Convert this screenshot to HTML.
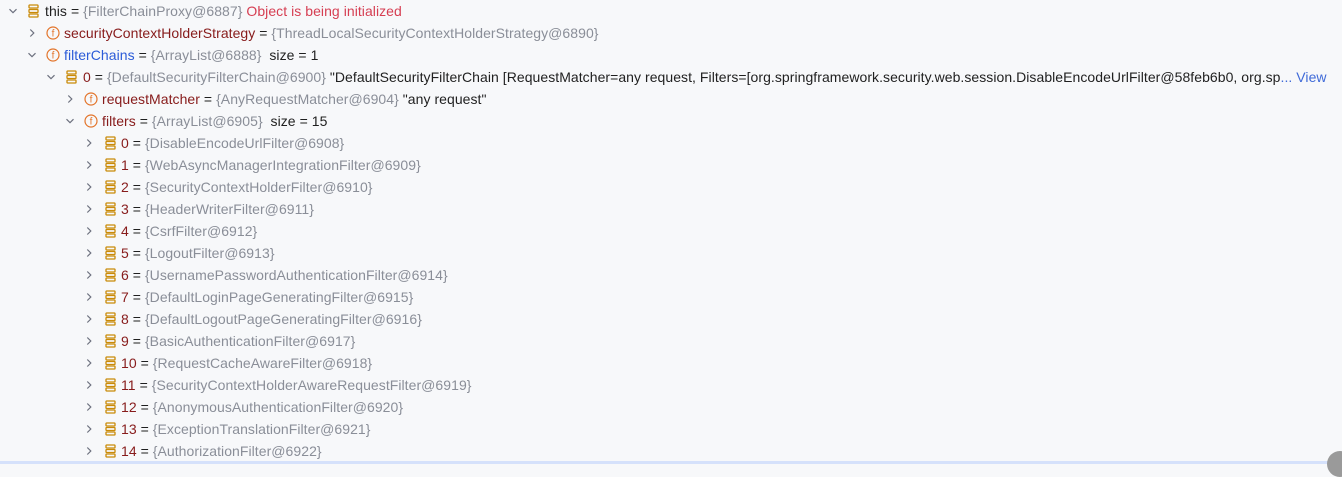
<!DOCTYPE html>
<html><head><meta charset="utf-8"><style>
html,body{margin:0;padding:0;}
body{width:1342px;height:464px;background:#f7f8fa;position:relative;overflow:hidden;font-family:"Liberation Sans",sans-serif;font-size:14px;letter-spacing:0.05px;color:#1f1f1f;}
.r{position:absolute;height:22px;line-height:22px;white-space:nowrap;left:0;}
.a{position:absolute;top:6px;width:10px;height:10px;}
.o{position:absolute;top:4px;width:11px;height:14px;}
.f{position:absolute;top:4px;width:14px;height:14px;}
.t{position:absolute;top:0;}
.g{color:#8a8e98}.n{color:#871b1b}.b{color:#2b5bd8}.e{color:#d63e52}.v{color:#1f1f1f}.l{color:#3f6ad8}
.sel{position:absolute;left:0;top:461px;width:1342px;height:3px;background:#d5e1fb}
.sc{position:absolute;left:1327px;top:451px;width:26px;height:26px;border-radius:50%;background:#9a9a9a}
</style></head><body>
<svg width="0" height="0" style="position:absolute"><defs>
<symbol id="dn" viewBox="0 0 10 10"><path d="M1.5 3.2 L5 6.7 L8.5 3.2" fill="none" stroke="#6c707e" stroke-width="1.2"/></symbol>
<symbol id="rt" viewBox="0 0 10 10"><path d="M3.3 1.5 L6.8 5 L3.3 8.5" fill="none" stroke="#6c707e" stroke-width="1.2"/></symbol>
<symbol id="ob" viewBox="0 0 11 14"><g fill="none" stroke="#c98a08" stroke-width="1.3"><rect x="1" y="1" width="9" height="3" rx=".6"/><rect x="1" y="5.5" width="9" height="3" rx=".6"/><rect x="1" y="10" width="9" height="3" rx=".6"/></g></symbol>
<symbol id="fi" viewBox="0 0 14 14"><circle cx="7" cy="7" r="6" fill="none" stroke="#e3742a" stroke-width="1.2"/><text x="7" y="10.5" text-anchor="middle" font-family="Liberation Sans,sans-serif" font-size="10" fill="#e3742a">f</text></symbol>
</defs></svg>

<div class="r" style="top:0"><svg class="a" style="left:8px"><use href="#dn"/></svg><svg class="o" style="left:28px"><use href="#ob"/></svg><span class="t" style="left:45px"><span class="v">this</span> = <span class="g">{FilterChainProxy@6887}</span> <span class="e">Object is being initialized</span></span></div>
<div class="r" style="top:22px"><svg class="a" style="left:27px"><use href="#rt"/></svg><svg class="f" style="left:46px"><use href="#fi"/></svg><span class="t" style="left:64px"><span class="n">securityContextHolderStrategy</span> = <span class="g">{ThreadLocalSecurityContextHolderStrategy@6890}</span></span></div>
<div class="r" style="top:44px"><svg class="a" style="left:27px"><use href="#dn"/></svg><svg class="f" style="left:46px"><use href="#fi"/></svg><span class="t" style="left:64px"><span class="b">filterChains</span> = <span class="g">{ArrayList@6888}</span>&nbsp; size = 1</span></div>
<div class="r" style="top:66px"><svg class="a" style="left:46px"><use href="#dn"/></svg><svg class="o" style="left:66px"><use href="#ob"/></svg><span class="t" style="left:83px"><span class="n">0</span> = <span class="g">{DefaultSecurityFilterChain@6900}</span> "DefaultSecurityFilterChain [RequestMatcher=any request, Filters=[org.springframework.security.web.session.DisableEncodeUrlFilter@58feb6b0, org.sp<span class="l">... View</span></span></div>
<div class="r" style="top:88px"><svg class="a" style="left:65px"><use href="#rt"/></svg><svg class="f" style="left:84px"><use href="#fi"/></svg><span class="t" style="left:102px"><span class="n">requestMatcher</span> = <span class="g">{AnyRequestMatcher@6904}</span> "any request"</span></div>
<div class="r" style="top:110px"><svg class="a" style="left:65px"><use href="#dn"/></svg><svg class="f" style="left:84px"><use href="#fi"/></svg><span class="t" style="left:102px"><span class="n">filters</span> = <span class="g">{ArrayList@6905}</span>&nbsp; size = 15</span></div>

<div class="r" style="top:132px"><svg class="a" style="left:84px"><use href="#rt"/></svg><svg class="o" style="left:105px"><use href="#ob"/></svg><span class="t" style="left:121px"><span class="n">0</span> = <span class="g">{DisableEncodeUrlFilter@6908}</span></span></div>
<div class="r" style="top:154px"><svg class="a" style="left:84px"><use href="#rt"/></svg><svg class="o" style="left:105px"><use href="#ob"/></svg><span class="t" style="left:121px"><span class="n">1</span> = <span class="g">{WebAsyncManagerIntegrationFilter@6909}</span></span></div>
<div class="r" style="top:176px"><svg class="a" style="left:84px"><use href="#rt"/></svg><svg class="o" style="left:105px"><use href="#ob"/></svg><span class="t" style="left:121px"><span class="n">2</span> = <span class="g">{SecurityContextHolderFilter@6910}</span></span></div>
<div class="r" style="top:198px"><svg class="a" style="left:84px"><use href="#rt"/></svg><svg class="o" style="left:105px"><use href="#ob"/></svg><span class="t" style="left:121px"><span class="n">3</span> = <span class="g">{HeaderWriterFilter@6911}</span></span></div>
<div class="r" style="top:220px"><svg class="a" style="left:84px"><use href="#rt"/></svg><svg class="o" style="left:105px"><use href="#ob"/></svg><span class="t" style="left:121px"><span class="n">4</span> = <span class="g">{CsrfFilter@6912}</span></span></div>
<div class="r" style="top:242px"><svg class="a" style="left:84px"><use href="#rt"/></svg><svg class="o" style="left:105px"><use href="#ob"/></svg><span class="t" style="left:121px"><span class="n">5</span> = <span class="g">{LogoutFilter@6913}</span></span></div>
<div class="r" style="top:264px"><svg class="a" style="left:84px"><use href="#rt"/></svg><svg class="o" style="left:105px"><use href="#ob"/></svg><span class="t" style="left:121px"><span class="n">6</span> = <span class="g">{UsernamePasswordAuthenticationFilter@6914}</span></span></div>
<div class="r" style="top:286px"><svg class="a" style="left:84px"><use href="#rt"/></svg><svg class="o" style="left:105px"><use href="#ob"/></svg><span class="t" style="left:121px"><span class="n">7</span> = <span class="g">{DefaultLoginPageGeneratingFilter@6915}</span></span></div>
<div class="r" style="top:308px"><svg class="a" style="left:84px"><use href="#rt"/></svg><svg class="o" style="left:105px"><use href="#ob"/></svg><span class="t" style="left:121px"><span class="n">8</span> = <span class="g">{DefaultLogoutPageGeneratingFilter@6916}</span></span></div>
<div class="r" style="top:330px"><svg class="a" style="left:84px"><use href="#rt"/></svg><svg class="o" style="left:105px"><use href="#ob"/></svg><span class="t" style="left:121px"><span class="n">9</span> = <span class="g">{BasicAuthenticationFilter@6917}</span></span></div>
<div class="r" style="top:352px"><svg class="a" style="left:84px"><use href="#rt"/></svg><svg class="o" style="left:105px"><use href="#ob"/></svg><span class="t" style="left:121px"><span class="n">10</span> = <span class="g">{RequestCacheAwareFilter@6918}</span></span></div>
<div class="r" style="top:374px"><svg class="a" style="left:84px"><use href="#rt"/></svg><svg class="o" style="left:105px"><use href="#ob"/></svg><span class="t" style="left:121px"><span class="n">11</span> = <span class="g">{SecurityContextHolderAwareRequestFilter@6919}</span></span></div>
<div class="r" style="top:396px"><svg class="a" style="left:84px"><use href="#rt"/></svg><svg class="o" style="left:105px"><use href="#ob"/></svg><span class="t" style="left:121px"><span class="n">12</span> = <span class="g">{AnonymousAuthenticationFilter@6920}</span></span></div>
<div class="r" style="top:418px"><svg class="a" style="left:84px"><use href="#rt"/></svg><svg class="o" style="left:105px"><use href="#ob"/></svg><span class="t" style="left:121px"><span class="n">13</span> = <span class="g">{ExceptionTranslationFilter@6921}</span></span></div>
<div class="r" style="top:440px"><svg class="a" style="left:84px"><use href="#rt"/></svg><svg class="o" style="left:105px"><use href="#ob"/></svg><span class="t" style="left:121px"><span class="n">14</span> = <span class="g">{AuthorizationFilter@6922}</span></span></div>
<div class="sel"></div>
<div class="sc"></div>
</body></html>
